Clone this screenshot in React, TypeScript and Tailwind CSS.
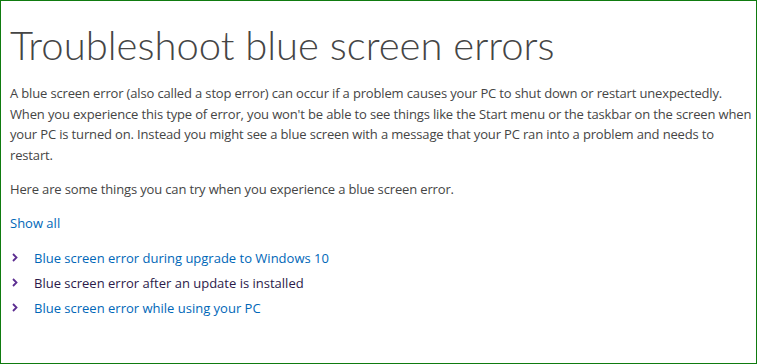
import React from "react";

const links = [
  { text: "Blue screen error during upgrade to Windows 10", visited: false },
  { text: "Blue screen error after an update is installed", visited: true },
  { text: "Blue screen error while using your PC", visited: false },
];

function Chevron() {
  return (
    <svg width="6" height="9" viewBox="0 0 6 9" className="shrink-0">
      <path d="M1 1 L4.5 4.5 L1 8" fill="none" stroke="#5c2d91" strokeWidth="1.8" />
    </svg>
  );
}

export default function App() {
  return (
    <div
      className="w-[757px] h-[364px] border border-[#0f7b0f] bg-white overflow-hidden"
      style={{ fontFamily: '"Open Sans", "Noto Sans", sans-serif' }}
    >
      <div className="pl-[9px] pt-[18px]">
        <h1
          className="text-[40px] leading-[52px] font-light text-[#454545] whitespace-nowrap"
          style={{ fontFamily: 'Lato, "Open Sans", sans-serif' }}
        >
          Troubleshoot blue screen errors
        </h1>
        <p className="mt-[12px] text-[13px] tracking-[-0.15px] leading-[20.5px] text-[#454545] whitespace-nowrap">
          A blue screen error (also called a stop error) can occur if a problem causes your PC to shut down or restart unexpectedly.
          <br />
          When you experience this type of error, you won't be able to see things like the Start menu or the taskbar on the screen when
          <br />
          your PC is turned on. Instead you might see a blue screen with a message that your PC ran into a problem and needs to
          <br />
          restart.
        </p>
        <p className="mt-[14px] text-[13px] tracking-[-0.15px] leading-[20.5px] text-[#454545]">
          Here are some things you can try when you experience a blue screen error.
        </p>
        <div className="mt-[13px] text-[13px] leading-[20px] text-[#0067b8]">Show all</div>
        <ul className="mt-[15px] flex flex-col gap-[5px]">
          {links.map((l) => (
            <li key={l.text} className="flex items-center h-[20px]">
              <span className="w-[24px] pl-[2px] flex items-center">
                <Chevron />
              </span>
              <span
                className={
                  "text-[13px] leading-[20px] whitespace-nowrap " +
                  (l.visited ? "text-[#2b1a4a]" : "text-[#0067b8]")
                }
              >
                {l.text}
              </span>
            </li>
          ))}
        </ul>
      </div>
    </div>
  );
}
